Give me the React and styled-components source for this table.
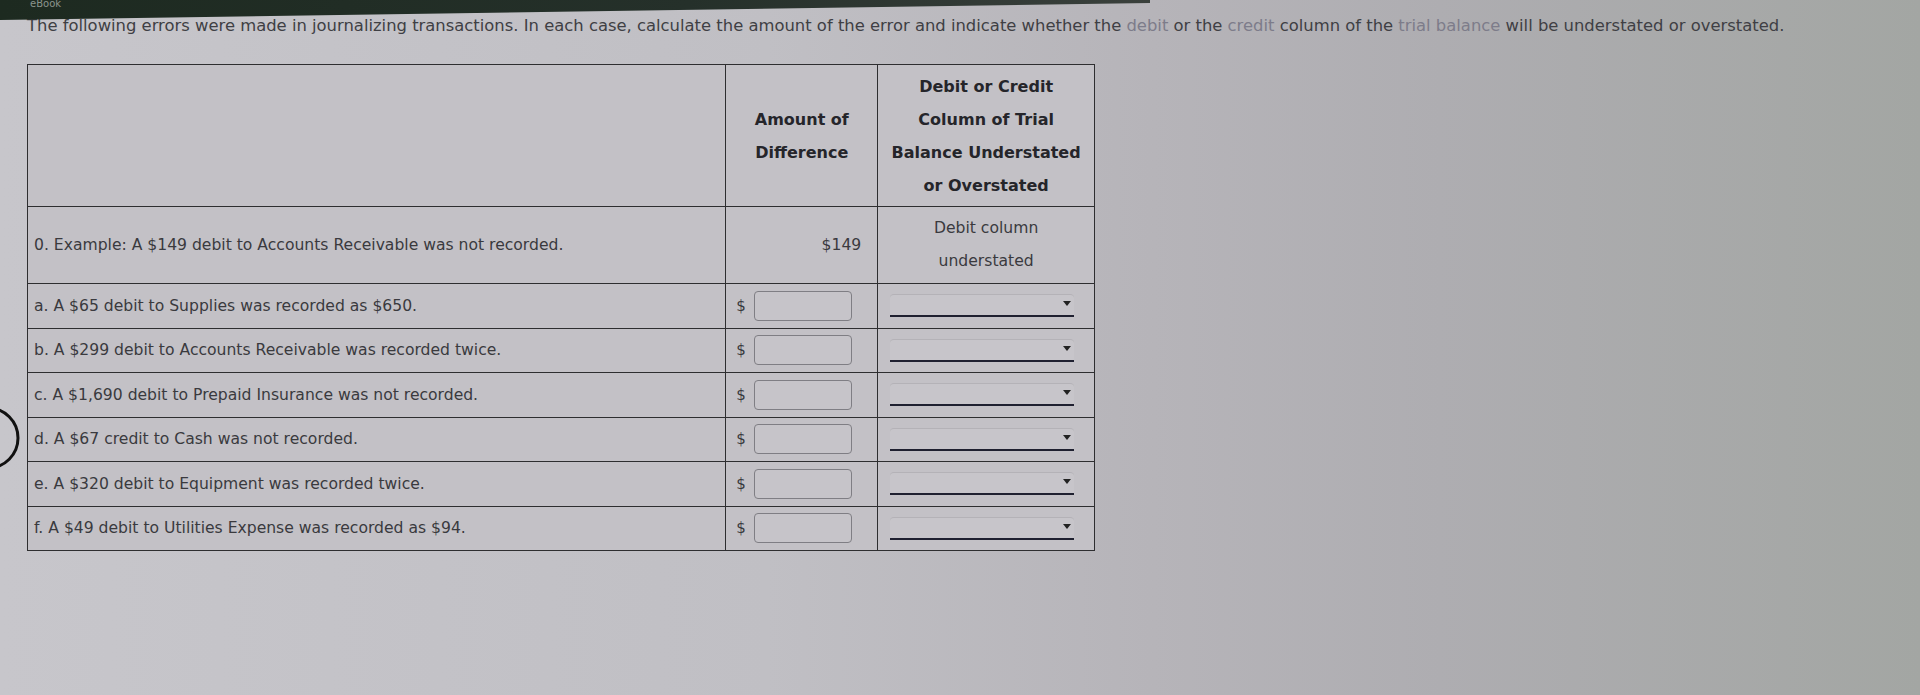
import React from "react";
import styled, { createGlobalStyle } from "styled-components";

const Global = createGlobalStyle`
  html, body {
    margin: 0;
    padding: 0;
  }
  body {
    width: 1920px;
    height: 695px;
    overflow: hidden;
    font-family: "DejaVu Sans", Verdana, sans-serif;
    background: linear-gradient(90deg, #c7c6cb 0%, #c0bfc4 40%, #b6b4b9 60%, #aeadb1 75%, #a3a6a3 100%);
  }
`;

const Page = styled.div`
  position: relative;
  width: 1920px;
  height: 695px;
`;

const TopBar = styled.div`
  width: 1150px;
  height: 20px;
  background: linear-gradient(90deg, #1d2a20, #25302a 60%, #3a403c);
  clip-path: polygon(0 0, 100% 0, 100% 15%, 0 100%);
  color: #8a948c;
  font-size: 10px;
  padding-left: 30px;
  line-height: 8px;
  box-sizing: border-box;
`;

const Intro = styled.p`
  margin: 0;
  padding: 0 0 0 27px;
  font-size: 16.4px;
  line-height: 18px;
  color: #3f3f44;
  margin-top: -3px;
`;

const Term = styled.span`
  color: #7d7c8a;
`;

const Table = styled.table`
  margin: 29px 0 0 27px;
  border-collapse: collapse;
  width: 1068px;
  background: #c3c1c6;
  color: #3a3a3e;
  font-size: 15.6px;
  td, th {
    border: 1.5px solid #2e2e30;
    padding: 0;
  }
`;

const HeadCell = styled.th`
  width: ${p => p.w}px;
  height: 141px;
  font-weight: bold;
  font-size: 16px;
  line-height: 33px;
  text-align: center;
  vertical-align: middle;
  color: #25252a;
`;

const Row = styled.tr`
  height: ${p => p.h}px;
`;

const Desc = styled.td`
  padding-left: 6px !important;
  vertical-align: middle;
`;

const AmountCell = styled.td`
  text-align: right;
  padding-right: 16px !important;
  vertical-align: middle;
`;

const Verdict = styled.td`
  text-align: center;
  line-height: 33px;
`;

const InputCell = styled.td`
  vertical-align: middle;
`;

const InputWrap = styled.div`
  display: flex;
  align-items: center;
  padding-left: 10px;
  gap: 8px;
`;

const Dollar = styled.span`
  font-size: 15px;
  color: #3a3a3e;
`;

const Box = styled.div`
  width: 96px;
  height: 28px;
  border: 1.5px solid #7f7e84;
  border-radius: 4px;
  background: #c6c4c9;
`;

const SelectWrap = styled.div`
  margin: 0 20px 0 12px;
  height: 20px;
  position: relative;
  border-radius: 4px 4px 0 0;
  background: #c7c5ca;
  border-top: 1px solid #b4b2b7;
  border-bottom: 2px solid #1f2030;
`;

const Arrow = styled.span`
  position: absolute;
  right: 3px;
  top: 6px;
  width: 0;
  height: 0;
  border-left: 4px solid transparent;
  border-right: 4px solid transparent;
  border-top: 5px solid #222;
`;

const Arc = styled.svg`
  position: absolute;
  left: 0;
  top: 403px;
`;

const rows = [
  "a. A $65 debit to Supplies was recorded as $650.",
  "b. A $299 debit to Accounts Receivable was recorded twice.",
  "c. A $1,690 debit to Prepaid Insurance was not recorded.",
  "d. A $67 credit to Cash was not recorded.",
  "e. A $320 debit to Equipment was recorded twice.",
  "f. A $49 debit to Utilities Expense was recorded as $94."
];

export default function App() {
  return (
    <Page>
      <Global />
      <TopBar>eBook</TopBar>
      <Intro>
        The following errors were made in journalizing transactions. In each case, calculate the amount of the error and indicate whether the <Term>debit</Term> or the <Term>credit</Term> column of the <Term>trial balance</Term> will be understated or overstated.
      </Intro>
      <Table>
        <thead>
          <tr>
            <HeadCell w={699}></HeadCell>
            <HeadCell w={151}>Amount of<br />Difference</HeadCell>
            <HeadCell w={216}>Debit or Credit<br />Column of Trial<br />Balance Understated<br />or Overstated</HeadCell>
          </tr>
        </thead>
        <tbody>
          <Row h={77}>
            <Desc>0. Example: A $149 debit to Accounts Receivable was not recorded.</Desc>
            <AmountCell>$149</AmountCell>
            <Verdict>Debit column<br />understated</Verdict>
          </Row>
          {rows.map(r => (
            <Row h={44.5} key={r}>
              <Desc>{r}</Desc>
              <InputCell>
                <InputWrap>
                  <Dollar>$</Dollar>
                  <Box />
                </InputWrap>
              </InputCell>
              <InputCell>
                <SelectWrap>
                  <Arrow />
                </SelectWrap>
              </InputCell>
            </Row>
          ))}
        </tbody>
      </Table>
      <Arc width="20" height="70" viewBox="0 0 20 70">
        <circle cx="-12" cy="35" r="30" fill="none" stroke="#111" strokeWidth="3" />
      </Arc>
    </Page>
  );
}
